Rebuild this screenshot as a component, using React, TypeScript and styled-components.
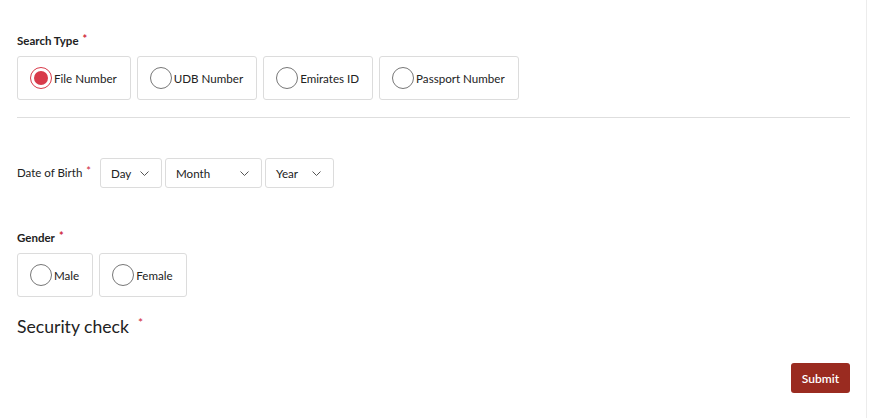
import React, { useState } from 'react'
import styled, { createGlobalStyle } from 'styled-components'

const Global = createGlobalStyle`
  html, body { margin: 0; padding: 0; background: #fff; }
  body { font-family: Lato, "Open Sans", sans-serif; color: #222; }
  * { box-sizing: border-box; }
`

const Page = styled.div`
  width: 867px;
  height: 418px;
  padding: 32px 16px 0 17px;
  border-right: 1px solid #ececec;
`

const Label = styled.div<{ bold?: boolean }>`
  font-size: 11.5px;
  font-weight: ${(p) => (p.bold ? 700 : 400)};
  color: #222;
  line-height: 18px;
`

const Star = styled.span`
  color: #d0263a;
  margin-left: 4px;
  font-size: 11px;
  vertical-align: top;
  position: relative;
  top: -2px;
`

const OptionRow = styled.div<{ gap: number }>`
  display: flex;
  gap: ${(p) => p.gap}px;
  margin-top: 6px;
`

const OptionBox = styled.label<{ h: number }>`
  display: flex;
  align-items: center;
  height: ${(p) => p.h}px;
  padding: 0 13px 0 12px;
  border: 1px solid #dcdcdc;
  border-radius: 3px;
  font-size: 11.6px;
  color: #222;
  cursor: pointer;
`

const Circle = styled.span<{ checked: boolean }>`
  width: 22px;
  height: 22px;
  border-radius: 50%;
  border: 1px solid ${(p) => (p.checked ? '#d83a4a' : '#777')};
  margin-right: 2px;
  display: flex;
  align-items: center;
  justify-content: center;
  flex-shrink: 0;

  &::after {
    content: '';
    width: 14px;
    height: 14px;
    border-radius: 50%;
    background: ${(p) => (p.checked ? '#d83a4a' : 'transparent')};
  }
`

const Divider = styled.hr`
  border: none;
  border-top: 1px solid #dedede;
  margin: 17px 0 0 0;
  width: 833px;
`

const DobRow = styled.div`
  display: flex;
  align-items: center;
  margin-top: 40px;
`

const Selects = styled.div`
  display: flex;
  gap: 3px;
  margin-left: 9px;
`

const SelectBox = styled.div<{ w: number }>`
  width: ${(p) => p.w}px;
  height: 30px;
  border: 1px solid #dcdcdc;
  border-radius: 3px;
  display: flex;
  align-items: center;
  justify-content: space-between;
  padding: 0 12px 0 10px;
  font-size: 11.6px;
  color: #222;
`

const GenderBlock = styled.div`
  margin-top: 41px;
`

const Security = styled.div`
  margin-top: 19px;
  font-size: 17.6px;
  color: #222;
  display: flex;
  align-items: flex-start;
`

const SecurityStar = styled.span`
  color: #d0263a;
  font-size: 12px;
  margin-left: 9px;
  line-height: 14px;
`

const Footer = styled.div`
  display: flex;
  justify-content: flex-end;
  margin-top: 26px;
`

const Submit = styled.button`
  background: #9a2b20;
  color: #fff;
  border: none;
  border-radius: 3px;
  height: 30px;
  width: 59px;
  font-family: Lato, sans-serif;
  font-size: 12px;
  font-weight: 600;
  cursor: pointer;
`

const Chevron = () => (
  <svg width="9" height="5" viewBox="0 0 9 5" fill="none">
    <path d="M0.5 0.5l4 4 4-4" stroke="#555" strokeWidth="1" />
  </svg>
)

const Radio: React.FC<{ label: string; checked: boolean; h: number; onClick: () => void }> = ({
  label,
  checked,
  h,
  onClick,
}) => (
  <OptionBox h={h} onClick={onClick}>
    <Circle checked={checked} />
    {label}
  </OptionBox>
)

export default function App() {
  const [type, setType] = useState('File Number')
  const [gender, setGender] = useState('')
  const types = ['File Number', 'UDB Number', 'Emirates ID', 'Passport Number']

  return (
    <Page>
      <Global />
      <Label bold>
        Search Type<Star>*</Star>
      </Label>
      <OptionRow gap={6}>
        {types.map((t) => (
          <Radio key={t} label={t} h={44} checked={type === t} onClick={() => setType(t)} />
        ))}
      </OptionRow>
      <Divider />

      <DobRow>
        <Label>
          Date of Birth<Star>*</Star>
        </Label>
        <Selects>
          <SelectBox w={62}>
            Day <Chevron />
          </SelectBox>
          <SelectBox w={97}>
            Month <Chevron />
          </SelectBox>
          <SelectBox w={69}>
            Year <Chevron />
          </SelectBox>
        </Selects>
      </DobRow>

      <GenderBlock>
        <Label bold>
          Gender<Star>*</Star>
        </Label>
        <OptionRow gap={6}>
          {['Male', 'Female'].map((g) => (
            <Radio key={g} label={g} h={44} checked={gender === g} onClick={() => setGender(g)} />
          ))}
        </OptionRow>
      </GenderBlock>

      <Security>
        Security check<SecurityStar>*</SecurityStar>
      </Security>

      <Footer>
        <Submit>Submit</Submit>
      </Footer>
    </Page>
  )
}
